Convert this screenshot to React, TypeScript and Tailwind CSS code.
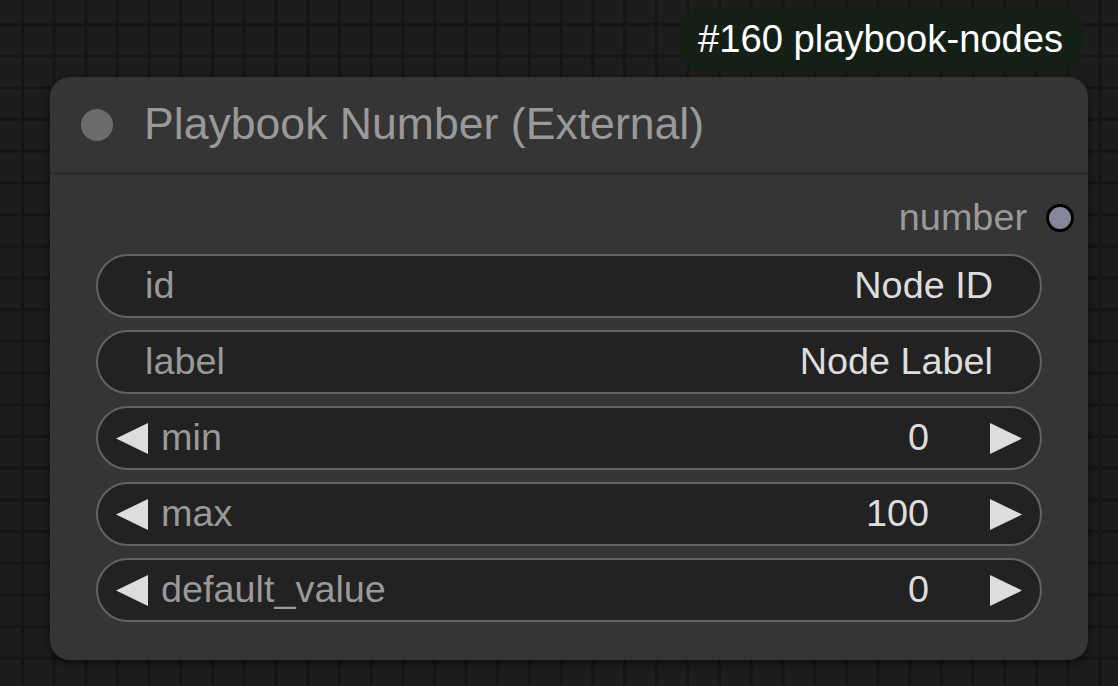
import React from "react";

const FONT = "font-['Liberation_Sans',Arial,Helvetica,sans-serif]";

type Widget =
  | { kind: "text"; name: string; value: string }
  | { kind: "number"; name: string; value: string };

const widgets: Widget[] = [
  { kind: "text", name: "id", value: "Node ID" },
  { kind: "text", name: "label", value: "Node Label" },
  { kind: "number", name: "min", value: "0" },
  { kind: "number", name: "max", value: "100" },
  { kind: "number", name: "default_value", value: "0" },
];

function Arrow({ dir }: { dir: "left" | "right" }) {
  return (
    <svg width="32" height="31" viewBox="0 0 32 31" className="shrink-0">
      {dir === "left" ? (
        <polygon points="0,15.5 32,0 32,31" fill="#dddddd" />
      ) : (
        <polygon points="32,15.5 0,0 0,31" fill="#dddddd" />
      )}
    </svg>
  );
}

function WidgetRow({ w }: { w: Widget }) {
  if (w.kind === "text") {
    return (
      <div className="flex h-[64px] items-center justify-between rounded-full border-2 border-[#636363] bg-[#222222] px-[47px]">
        <span className="text-[#999999]">{w.name}</span>
        <span className="text-[#dddddd]">{w.value}</span>
      </div>
    );
  }
  return (
    <div className="flex h-[64px] items-center rounded-full border-2 border-[#636363] bg-[#222222] pl-[18px] pr-[18px]">
      <Arrow dir="left" />
      <span className="ml-[13px] text-[#999999]">{w.name}</span>
      <span className="ml-auto mr-[61px] text-[#dddddd]">{w.value}</span>
      <Arrow dir="right" />
    </div>
  );
}

export default function App() {
  return (
    <div
      className={`relative h-[686px] w-[1118px] overflow-hidden bg-[#1d1d1d] bg-[linear-gradient(to_right,#151515_3px,transparent_3px),linear-gradient(to_bottom,#151515_3px,transparent_3px)] bg-[size:31.7px_31.7px] bg-[position:21px_23px] ${FONT}`}
    >
      {/* badge */}
      <div className="absolute left-[680px] top-[8px] flex h-[63px] w-[403px] items-center rounded-[20px] bg-[#142016] pl-[18px] text-[38.2px] leading-none text-white">
        #160 playbook-nodes
      </div>

      {/* node */}
      <div className="absolute left-[50px] top-[77px] flex h-[583px] w-[1038px] flex-col rounded-[20px] bg-[#353535] shadow-[0_3px_10px_rgba(0,0,0,0.55)]">
        {/* title */}
        <div className="flex h-[95px] items-center pl-[31px]">
          <div className="h-[32px] w-[32px] rounded-full bg-[#6b6b6b]" />
          <span className="ml-[31px] text-[44.6px] leading-none text-[#999999]">
            Playbook Number (External)
          </span>
        </div>
        <div className="h-[3px] bg-[#2b2b2b]" />

        {/* body */}
        <div className="flex flex-col px-[46px] pt-[6px] text-[37.8px] leading-none">
          <div className="mr-[-32px] flex h-[73px] items-center justify-end gap-[19px]">
            <span className="text-[#999999]">number</span>
            <div className="h-[28px] w-[28px] rounded-full border-[3px] border-black bg-[#86869a]" />
          </div>
          <div className="flex flex-col gap-[12px]">
            {widgets.map((w) => (
              <WidgetRow key={w.name} w={w} />
            ))}
          </div>
        </div>
      </div>
    </div>
  );
}
